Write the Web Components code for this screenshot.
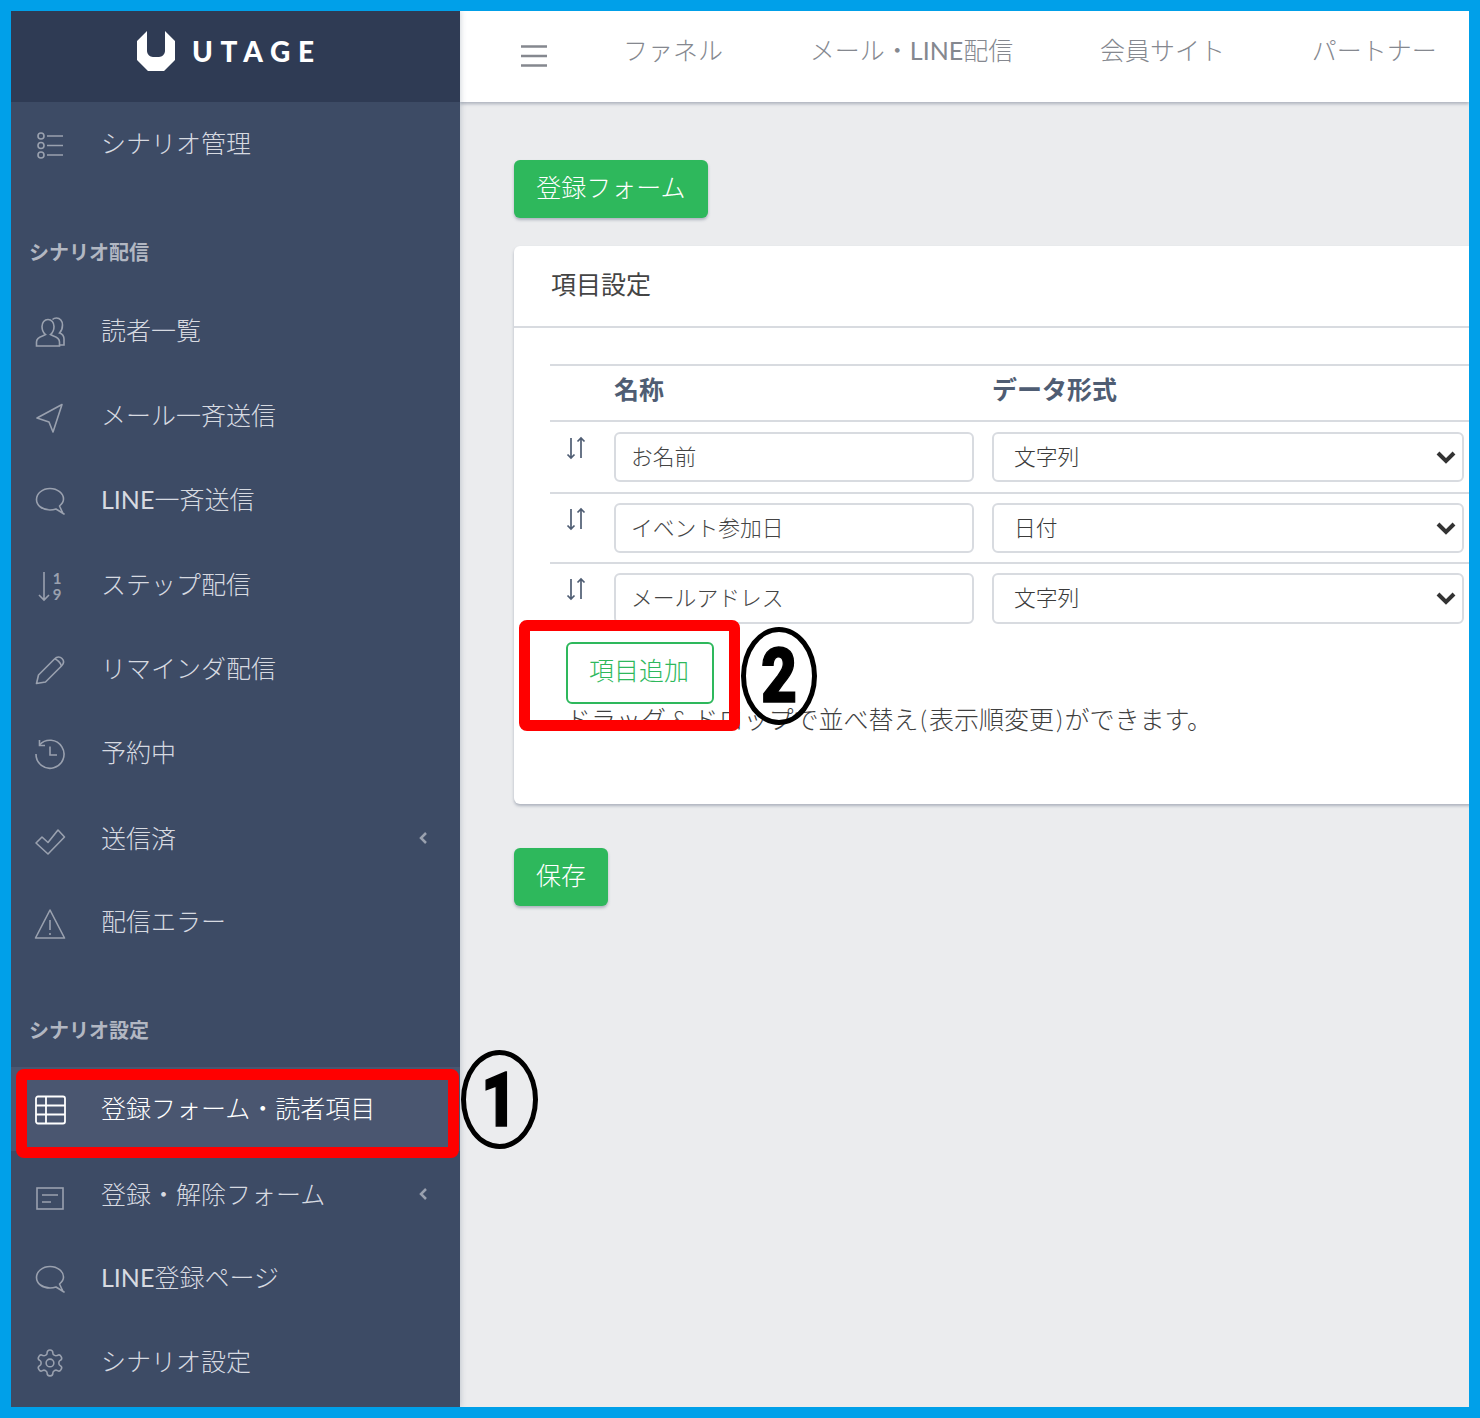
<!DOCTYPE html>
<html lang="ja">
<head>
<meta charset="utf-8">
<title>UTAGE</title>
<style>
  html, body { margin: 0; height: 1418px; overflow: hidden; }
  body {
    position: relative;
    box-sizing: border-box;
    padding: 11px;
    background: #00a0e9;
    font-family: Lato, "Noto Sans CJK JP", sans-serif;
  }
  .latin { font-weight: 400; }
  .amp { padding: 0 5px; }
  .paren { padding: 0 2px; }
</style>
</head>
<body>
<ut-app>
  <ut-sidebar slot="side">
    <ut-nav-item icon="list">シナリオ管理</ut-nav-item>
    <ut-nav-title>シナリオ配信</ut-nav-title>
    <ut-nav-item icon="people">読者一覧</ut-nav-item>
    <ut-nav-item icon="plane">メール一斉送信</ut-nav-item>
    <ut-nav-item icon="speech"><span class="latin">LINE</span>一斉送信</ut-nav-item>
    <ut-nav-item icon="sort">ステップ配信</ut-nav-item>
    <ut-nav-item icon="pencil">リマインダ配信</ut-nav-item>
    <ut-nav-item icon="history">予約中</ut-nav-item>
    <ut-nav-item icon="check" more>送信済</ut-nav-item>
    <ut-nav-item icon="warning">配信エラー</ut-nav-item>
    <ut-nav-title>シナリオ設定</ut-nav-title>
    <ut-nav-item icon="sheet" active>登録フォーム・読者項目</ut-nav-item>
    <ut-nav-item icon="form" more>登録・解除フォーム</ut-nav-item>
    <ut-nav-item icon="speech"><span class="latin">LINE</span>登録ページ</ut-nav-item>
    <ut-nav-item icon="gear">シナリオ設定</ut-nav-item>
  </ut-sidebar>

  <ut-topbar slot="top">
    <span>ファネル</span>
    <span>メール・<span class="latin">LINE</span>配信</span>
    <span>会員サイト</span>
    <span>パートナー</span>
  </ut-topbar>

  <ut-button style="width:194px">登録フォーム</ut-button>

  <ut-card heading="項目設定">
    <ut-field-head></ut-field-head>
    <ut-field-row name="お名前" kind="文字列" style="--pad:10px"></ut-field-row>
    <ut-field-row name="イベント参加日" kind="日付" style="--pad:8.500px;--pad-bottom:9.500px"></ut-field-row>
    <ut-field-row name="メールアドレス" kind="文字列" style="--pad:8.500px;--h:51px;--line:0px;--pad-bottom:0px"></ut-field-row>
    <ut-button outline style="width:148px;height:62px;margin:18px 0 0 16px">項目追加</ut-button>
    <ut-note>ドラッグ<span class="amp">&amp;</span>ドロップで並べ替え<span class="paren">(</span>表示順変更<span class="paren">)</span>ができます。</ut-note>
  </ut-card>

  <ut-button style="width:94px;margin-top:44px">保存</ut-button>
</ut-app>

<ut-redbox style="left:16px;top:1069px;width:443px;height:89px"></ut-redbox>
<ut-redbox style="left:519px;top:620px;width:221px;height:111px"></ut-redbox>
<ut-mark style="left:461px;top:1050px;width:77px;height:99px">1</ut-mark>
<ut-mark style="left:741px;top:627px;width:76px;height:98px">2</ut-mark>

<script>
// line icons of the side menu, all on a 30x30 box
const ICONS = {
  list: '<circle cx="6" cy="6" r="3"/><circle cx="6" cy="15.500" r="3"/><circle cx="6" cy="25" r="3"/><path d="M12 6h16M12 15.500h16M12 25h16"/>',
  people: '<path d="M1.500 29v-4c0-3.500 3-5 6-6l3-1.500c-2.500-2-3.500-5-3.500-8C7 5.500 9.500 2.500 13 2.500s6 3 6 7c0 3-1 6-3.500 8l3 1.500c3 1 6 2.500 6 6v4z"/><path d="M17.500 2.500c1-1 2.500-1.500 4-1.500 3.500 0 6 3 6 7 0 3-1 6-3 8 3 1 4.500 3 4.500 6v6h-4"/>',
  plane: '<path d="M27 2.500 2 16l12 4 4 10z" stroke-linejoin="round"/>',
  speech: '<path d="M15 2.500C7.500 2.500 1.500 7.500 1.500 13.500S7.500 24 15 24c2 0 4-.3 6-1l8 5-1-.5-3.500-7.500c2.500-2 4-4.500 4-7C28.500 7.500 22.500 2.500 15 2.500z" stroke-linejoin="round"/>',
  sort: '<path d="M9 1v28M4 24l5 5 5-5"/><text x="22" y="13" text-anchor="middle" font-size="15" font-weight="700" fill="#9aa1af" stroke="none">1</text><text x="22" y="29" text-anchor="middle" font-size="15" font-weight="700" fill="#9aa1af" stroke="none">9</text>',
  pencil: '<path d="M1.500 28.500 3.500 20 19.500 4c2.500-2.500 5.500-2.500 7.500-.5s2 5-.5 7.500L10.500 27z" stroke-linejoin="round"/><path d="M20 4c2 .5 5.500 3.500 6.500 7"/>',
  history: '<path d="M4.500 6A14 14 0 1 1 1 15"/><path d="M4.500 1v5.500H10"/><path d="M15 7.500V16h7"/>',
  check: '<path d="M1 18 7 12l6 5.500L23 5l6.500 7L13 29z" stroke-linejoin="round"/>',
  warning: '<path d="M15 2 29.500 30h-29z" stroke-linejoin="round"/><path d="M15 12v10M15 25v2"/>',
  sheet: '<rect x="1" y="1.500" width="29" height="27" rx="2"/><path d="M1 10.500h29M1 19.500h29M11 1.500v27"/>',
  form: '<rect x="2" y="7" width="26" height="21"/><path d="M7 14h16M7 21h9"/>',
  gear: '<g transform="translate(-.5 -.5) scale(1.290)" stroke-width="1.200"><path d="M12.220 2h-.44a2 2 0 0 0-2 2v.18a2 2 0 0 1-1 1.730l-.43.25a2 2 0 0 1-2 0l-.15-.08a2 2 0 0 0-2.730.73l-.22.38a2 2 0 0 0 .73 2.730l.15.1a2 2 0 0 1 1 1.720v.51a2 2 0 0 1-1 1.740l-.15.09a2 2 0 0 0-.73 2.730l.22.38a2 2 0 0 0 2.730.73l.15-.08a2 2 0 0 1 2 0l.43.25a2 2 0 0 1 1 1.730V20a2 2 0 0 0 2 2h.44a2 2 0 0 0 2-2v-.18a2 2 0 0 1 1-1.730l.43-.25a2 2 0 0 1 2 0l.15.08a2 2 0 0 0 2.730-.73l.22-.39a2 2 0 0 0-.73-2.730l-.15-.08a2 2 0 0 1-1-1.740v-.5a2 2 0 0 1 1-1.740l.15-.09a2 2 0 0 0 .73-2.730l-.22-.38a2 2 0 0 0-2.730-.73l-.15.08a2 2 0 0 1-2 0l-.43-.25a2 2 0 0 1-1-1.730V4a2 2 0 0 0-2-2z"/><circle cx="12" cy="12" r="3"/></g>'
};

// small helper, every element here is just a shadow root with fixed markup
class ShadowElement extends HTMLElement {
  constructor(html) {
    super();
    this.attachShadow({ mode: 'open' });
    this.shadowRoot.innerHTML = html;
  }
}

class UtApp extends ShadowElement {
  constructor() {
    super(`
      <style>
        :host { display: grid; grid-template-columns: 449px 1fr; grid-template-rows: 91px 1fr; height: 1396px; background: #ebecee; overflow: hidden; }
        .side { grid-row: 1 / 3; min-height: 0; position: relative; z-index: 2; }
        .top { position: relative; z-index: 1; }
        main { display: flex; flex-direction: column; align-items: flex-start; padding: 58px 0 0 54px; min-width: 0; overflow: hidden; }
      </style>
      <div class="side"><slot name="side"></slot></div>
      <div class="top"><slot name="top"></slot></div>
      <main><slot></slot></main>
    `);
  }
}

class UtSidebar extends ShadowElement {
  constructor() {
    super(`
      <style>
        :host { display: block; height: 100%; background: #3d4b65; box-shadow: 0 0 6px rgba(60,75,100,.3); }
        header { display: flex; align-items: center; gap: 17px; height: 91px; background: #2f3b54; padding: 0 0 11px 126px; box-sizing: border-box; }
        svg { display: block; }
        .name { color: #fff; font: 900 28px/1 Lato, sans-serif; letter-spacing: 7.700px; white-space: nowrap; }
      </style>
      <header>
        <svg width="38" height="42" viewBox="0 0 38 42"><path fill="#fff" d="M10 1v20c0 3 3 6 6 6h6c3 0 6-3 6-6V1l10 10v19L27 41H11L0 30V11z"/></svg>
        <span class="name">UTAGE</span>
      </header>
      <slot></slot>
    `);
  }
}

class UtNavItem extends ShadowElement {
  constructor() {
    super(`
      <style>
        :host { display: flex; align-items: center; height: 84.400px; padding-left: 24px; color: #d7dae1; font: 300 25px/30px Lato, "Noto Sans CJK JP", sans-serif; }
        :host([active]) { background: #4a5670; color: #fff; }
        .icon { width: 32px; height: 30px; margin: 2px 34px 0 0; flex: none; }
        :host([more]) .icon { margin-top: 4px; }
        .icon svg { display: block; overflow: visible; fill: none; stroke: #9aa1af; stroke-width: 1.600; font-family: Lato, sans-serif; }
        :host([active]) .icon svg { stroke: #fff; stroke-width: 1.800; }
        .text { flex: 1; white-space: nowrap; margin-top: -2px; }
        :host([more]) .text { margin-top: 1px; }
        .more { display: none; width: 12px; height: 14px; margin: 1px 31px 0 0; fill: none; stroke: #9aa1af; stroke-width: 2.500; }
        :host([more]) .more { display: block; }
      </style>
      <span class="icon"></span>
      <span class="text"><slot></slot></span>
      <svg class="more" viewBox="0 0 12 14"><path d="M9 2 4 7l5 5"/></svg>
    `);
  }
  connectedCallback() {
    const icon = ICONS[this.getAttribute('icon')];
    this.shadowRoot.querySelector('.icon').innerHTML = `<svg width="30" height="30" viewBox="0 0 30 30">${icon}</svg>`;
  }
}

class UtNavTitle extends ShadowElement {
  constructor() {
    super(`
      <style>
        :host { display: block; box-sizing: border-box; height: 102.750px; padding: 54px 0 0 18px; color: #b2b7c2; font: 700 20px/24px Lato, "Noto Sans CJK JP", sans-serif; }
      </style>
      <slot></slot>
    `);
  }
}

class UtTopbar extends ShadowElement {
  constructor() {
    super(`
      <style>
        :host { display: flex; align-items: center; height: 91px; background: #fff; box-shadow: 0 2px 3px rgba(60,75,100,.35); color: #85888f; font: 300 25px/30px Lato, "Noto Sans CJK JP", sans-serif; }
        .burger { width: 26px; height: 22px; margin: -1px 33px 0 61px; flex: none; stroke: #85888f; stroke-width: 2.400; }
        nav { display: flex; gap: 86.800px; margin: -14px 0 0 43px; white-space: nowrap; }
      </style>
      <svg class="burger" viewBox="0 0 26 22"><path d="M0 1.500h26M0 11h26M0 20.500h26"/></svg>
      <nav><slot></slot></nav>
    `);
  }
}

class UtButton extends ShadowElement {
  constructor() {
    super(`
      <style>
        :host { display: flex; align-items: center; justify-content: center; box-sizing: border-box; height: 58px; flex: none; border-radius: 6px; background: #2eb85c; color: #fff; box-shadow: 0 2px 3px rgba(60,75,100,.35); font: 300 25px/30px Lato, "Noto Sans CJK JP", sans-serif; white-space: nowrap; }
        :host([outline]) { background: #fff; color: #2eb85c; border: 2px solid #2eb85c; box-shadow: none; }
        span { margin-top: -4px; }
        :host([outline]) span { margin: -5px 2px 0 0; }
      </style>
      <span><slot></slot></span>
    `);
  }
}

class UtCard extends ShadowElement {
  constructor() {
    super(`
      <style>
        :host { display: block; box-sizing: border-box; width: 975px; height: 558px; margin-top: 28px; background: #fff; border-radius: 6px 0 0 6px; box-shadow: 0 2px 3px rgba(60,75,100,.35); }
        h2 { margin: 0; box-sizing: border-box; height: 82px; padding: 23px 0 0 37px; border-bottom: 2px solid #d8dbe0; color: #444; font: 400 25px/30px Lato, "Noto Sans CJK JP", sans-serif; }
        .body { padding: 36px 0 0 36px; }
      </style>
      <h2></h2>
      <div class="body"><slot></slot></div>
    `);
  }
  connectedCallback() {
    this.shadowRoot.querySelector('h2').textContent = this.getAttribute('heading');
  }
}

class UtFieldHead extends ShadowElement {
  constructor() {
    super(`
      <style>
        :host { display: block; box-sizing: border-box; height: 58px; padding: 8px 0 0 64px; border-top: 2px solid #d8dbe0; border-bottom: 2px solid #d8dbe0; color: #4f5d73; font: 700 25px/30px Lato, "Noto Sans CJK JP", sans-serif; }
        div { display: grid; grid-template-columns: 378px 1fr; }
      </style>
      <div><span>名称</span><span>データ形式</span></div>
    `);
  }
}

class UtFieldRow extends ShadowElement {
  constructor() {
    super(`
      <style>
        :host { display: grid; grid-template-columns: 64px 360px 490px; padding: var(--pad, 9px) 0 var(--pad-bottom, var(--pad, 9px)); border-bottom: var(--line, 2px) solid #d8dbe0; align-items: start; color: #444; font: 300 21.800px/30px Lato, "Noto Sans CJK JP", sans-serif; }
        .grip { width: 20px; height: 24px; margin: 4px 0 0 16px; fill: none; stroke: #4f5d73; stroke-width: 1.700; }
        .box { display: flex; align-items: center; justify-content: space-between; box-sizing: border-box; height: var(--h, 50px); border: 2px solid #d8dbe0; border-radius: 6px; white-space: nowrap; }
        .name { padding-left: 15px; }
        .kind { margin-left: 18px; padding: 0 6px 0 20px; color: #3a3a3a; }
        .kind svg { width: 20px; height: 14px; fill: none; stroke: #333; stroke-width: 4; }
      </style>
      <svg class="grip" viewBox="0 0 20 24"><path d="M5 2v20M1.500 18.500 5 22l3.500-3.500M15 22V2M11.500 5.500 15 2l3.500 3.500"/></svg>
      <div class="box name"></div>
      <div class="box kind"><span></span><svg viewBox="0 0 20 14"><path d="M2 3l8 8 8-8"/></svg></div>
    `);
  }
  connectedCallback() {
    this.shadowRoot.querySelector('.name').textContent = this.getAttribute('name');
    this.shadowRoot.querySelector('.kind span').textContent = this.getAttribute('kind');
  }
}

class UtNote extends ShadowElement {
  constructor() {
    super(`
      <style>
        :host { display: block; margin: 0 0 0 16px; color: #3f3f3f; font: 300 25px/30px Lato, "Noto Sans CJK JP", sans-serif; white-space: nowrap; }
      </style>
      <slot></slot>
    `);
  }
}

// the two annotations pasted over the screenshot
class UtRedbox extends ShadowElement {
  constructor() {
    super(`
      <style>
        :host { position: absolute; box-sizing: border-box; border: 11px solid #f00; border-radius: 8px; z-index: 5; }
      </style>
    `);
  }
}

class UtMark extends ShadowElement {
  constructor() {
    super(`
      <style>
        :host { position: absolute; box-sizing: border-box; display: flex; align-items: center; justify-content: center; border: 5px solid #000; border-radius: 50%; color: #000; font: 900 76px/1 Roboto, sans-serif; -webkit-text-stroke: 1.500px #000; z-index: 5; }
        span { display: block; transform: scaleX(.82); }
      </style>
      <span><slot></slot></span>
    `);
  }
}

customElements.define('ut-app', UtApp);
customElements.define('ut-sidebar', UtSidebar);
customElements.define('ut-nav-item', UtNavItem);
customElements.define('ut-nav-title', UtNavTitle);
customElements.define('ut-topbar', UtTopbar);
customElements.define('ut-button', UtButton);
customElements.define('ut-card', UtCard);
customElements.define('ut-field-head', UtFieldHead);
customElements.define('ut-field-row', UtFieldRow);
customElements.define('ut-note', UtNote);
customElements.define('ut-redbox', UtRedbox);
customElements.define('ut-mark', UtMark);
</script>
</body>
</html>
